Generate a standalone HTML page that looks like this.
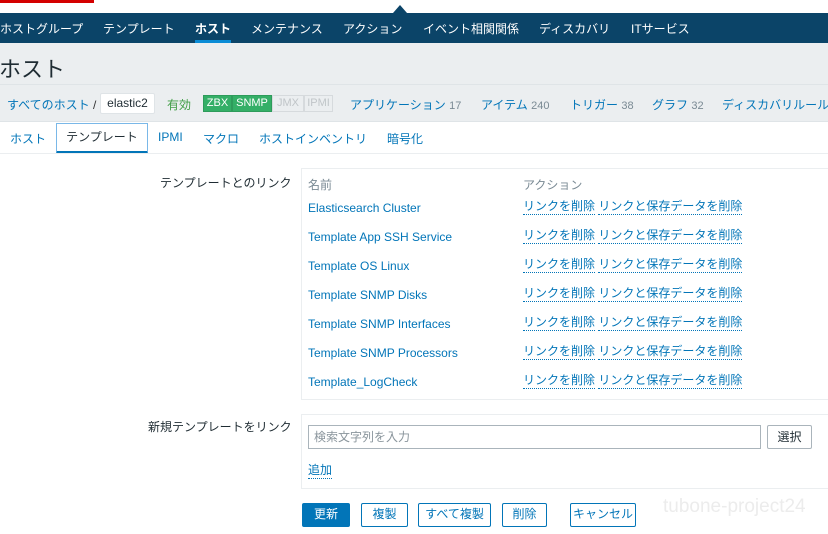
<!DOCTYPE html>
<html><head><meta charset="utf-8"><style>
*{margin:0;padding:0;box-sizing:border-box}
body{width:828px;height:534px;overflow:hidden;background:#fff;font-family:"Liberation Sans","Noto Sans CJK JP",sans-serif;font-size:12px;color:#1f2c33;position:relative}
.a{position:absolute;white-space:nowrap}
.nav{position:absolute;left:0;top:13px;width:828px;height:30px;background:#0b4468}
.nav span{position:absolute;top:7px;color:#fff;font-size:12px}
.lnk{color:#0275b8}
.dl{color:#0275b8;border-bottom:1px dotted #0275b8;padding-bottom:1px}
.btn{position:absolute;top:503px;height:24px;border:1px solid #0275b8;color:#0275b8;background:#fff;border-radius:2px;text-align:center;line-height:21px;font-size:12px}
</style></head><body>
<div class="a" style="left:0;top:0;width:94px;height:3px;background:#d40000"></div>
<div class="a" style="left:393px;top:5px;width:0;height:0;border-left:7px solid transparent;border-right:7px solid transparent;border-bottom:8px solid #0b4468"></div>
<div class="nav">
<span style="left:0">ホストグループ</span>
<span style="left:103px">テンプレート</span>
<span style="left:195px;font-weight:bold">ホスト</span>
<div class="a" style="left:195px;top:27px;width:36px;height:3px;background:#0a8cd6"></div>
<span style="left:251px">メンテナンス</span>
<span style="left:343px">アクション</span>
<span style="left:423px">イベント相関関係</span>
<span style="left:539px">ディスカバリ</span>
<span style="left:631px">ITサービス</span>
</div>
<div class="a" style="left:0;top:43px;width:828px;height:79px;background:#ebeef0;border-bottom:1px solid #dfe4e7"></div>
<div class="a" style="left:0;top:84px;width:828px;height:1px;background:#dfe4e7"></div>
<div class="a" style="left:-1px;top:52px;font-size:22px;color:#1f2c33">ホスト</div>
<div class="a lnk" style="left:7px;top:96px">すべてのホスト <span style="color:#333">/</span></div>
<div class="a" style="left:100px;top:93px;width:55px;height:21px;background:#fff;border:1px solid #dfe4e7;border-radius:2px;text-align:center;line-height:19px">elastic2</div>
<div class="a" style="left:167px;top:96px;color:#429e47">有効</div>
<div class="a" style="left:203px;top:95px;height:17px;width:29px;text-align:center;background:#34af67;color:#fff;font-size:11px;line-height:15px;border:1px solid #2e9b5b">ZBX</div>
<div class="a" style="left:232px;top:95px;height:17px;width:40px;text-align:center;background:#34af67;color:#fff;font-size:11px;line-height:15px;border:1px solid #2e9b5b">SNMP</div>
<div class="a" style="left:272px;top:95px;height:17px;width:32px;text-align:center;background:#ebeef0;color:#c0c5c8;font-size:11px;line-height:15px;border:1px solid #d6dadd">JMX</div>
<div class="a" style="left:304px;top:95px;height:17px;width:29px;text-align:center;background:#ebeef0;color:#c0c5c8;font-size:11px;line-height:15px;border:1px solid #d6dadd">IPMI</div>
<div class="a lnk" style="left:350px;top:96px">アプリケーション <span style="color:#7a8a94;font-size:11px">17</span></div>
<div class="a lnk" style="left:481px;top:96px">アイテム <span style="color:#7a8a94;font-size:11px">240</span></div>
<div class="a lnk" style="left:570px;top:96px">トリガー <span style="color:#7a8a94;font-size:11px">38</span></div>
<div class="a lnk" style="left:652px;top:96px">グラフ <span style="color:#7a8a94;font-size:11px">32</span></div>
<div class="a lnk" style="left:722px;top:96px">ディスカバリルール</div>
<div class="a lnk" style="left:10px;top:130px">ホスト</div>
<div class="a" style="left:56px;top:123px;width:92px;height:31px;border:1px solid #7ab8e8;border-bottom:3px solid #0275b8;text-align:center;line-height:27px">テンプレート</div>
<div class="a lnk" style="left:158px;top:130px">IPMI</div>
<div class="a lnk" style="left:203px;top:130px">マクロ</div>
<div class="a lnk" style="left:259px;top:130px">ホストインベントリ</div>
<div class="a lnk" style="left:387px;top:130px">暗号化</div>
<div class="a" style="left:0;top:153px;width:828px;height:1px;background:#ebeef0"></div>
<div class="a" style="left:160px;top:174px">テンプレートとのリンク</div>
<div class="a" style="left:301px;top:168px;width:540px;height:232px;border:1px solid #ebeef0"></div>
<div class="a" style="left:308px;top:176px;color:#7a8a94">名前</div>
<div class="a" style="left:523px;top:176px;color:#7a8a94">アクション</div>
<div class="a lnk" style="left:308px;top:201px">Elasticsearch Cluster</div>
<div class="a lnk" style="left:308px;top:230px">Template App SSH Service</div>
<div class="a lnk" style="left:308px;top:259px">Template OS Linux</div>
<div class="a lnk" style="left:308px;top:288px">Template SNMP Disks</div>
<div class="a lnk" style="left:308px;top:317px">Template SNMP Interfaces</div>
<div class="a lnk" style="left:308px;top:346px">Template SNMP Processors</div>
<div class="a lnk" style="left:308px;top:375px">Template_LogCheck</div>
<div class="a" style="left:523px;top:197px"><span class="dl">リンクを削除</span> <span class="dl">リンクと保存データを削除</span></div>
<div class="a" style="left:523px;top:226px"><span class="dl">リンクを削除</span> <span class="dl">リンクと保存データを削除</span></div>
<div class="a" style="left:523px;top:255px"><span class="dl">リンクを削除</span> <span class="dl">リンクと保存データを削除</span></div>
<div class="a" style="left:523px;top:284px"><span class="dl">リンクを削除</span> <span class="dl">リンクと保存データを削除</span></div>
<div class="a" style="left:523px;top:313px"><span class="dl">リンクを削除</span> <span class="dl">リンクと保存データを削除</span></div>
<div class="a" style="left:523px;top:342px"><span class="dl">リンクを削除</span> <span class="dl">リンクと保存データを削除</span></div>
<div class="a" style="left:523px;top:371px"><span class="dl">リンクを削除</span> <span class="dl">リンクと保存データを削除</span></div>
<div class="a" style="left:148px;top:418px">新規テンプレートをリンク</div>
<div class="a" style="left:301px;top:414px;width:540px;height:75px;border:1px solid #ebeef0"></div>
<div class="a" style="left:308px;top:425px;width:453px;height:24px;border:1px solid #aab4bb;color:#8a959c;padding-left:5px;line-height:22px">検索文字列を入力</div>
<div class="a" style="left:767px;top:425px;width:45px;height:24px;border:1px solid #aab4bb;border-radius:2px;text-align:center;line-height:22px">選択</div>
<div class="a" style="left:308px;top:461px"><span class="dl">追加</span></div>
<div class="a" style="left:663px;top:496px;font-size:19px;color:#ececec">tubone-project24</div>
<div class="btn" style="left:302px;width:48px;background:#0275b8;color:#fff">更新</div>
<div class="btn" style="left:361px;width:47px">複製</div>
<div class="btn" style="left:418px;width:73px">すべて複製</div>
<div class="btn" style="left:502px;width:45px">削除</div>
<div class="btn" style="left:570px;width:66px">キャンセル</div>
</body></html>
